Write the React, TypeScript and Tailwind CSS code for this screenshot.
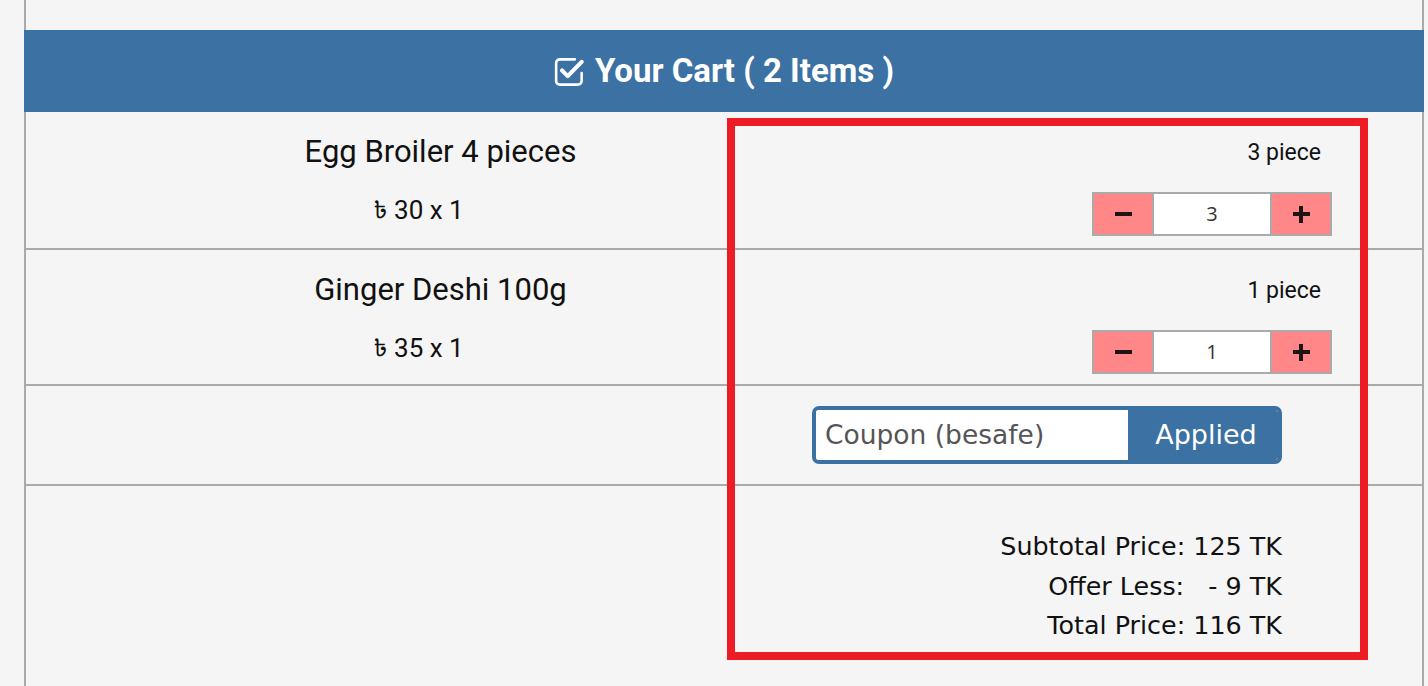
import React from "react";

function CheckIcon() {
  return (
    <svg width="30" height="30" viewBox="0 0 28 28" fill="none" className="mr-[11px] mt-[1px]">
      <path
        d="M19.5 2.2H5.5C3.5 2.2 2 3.7 2 5.7V22.3C2 24.3 3.5 25.8 5.5 25.8H22.3C24.3 25.8 25.8 24.3 25.8 22.3V15"
        stroke="white"
        strokeWidth="2.4"
        strokeLinecap="round"
      />
      <path d="M7.5 12.5L12.8 17.8L25.8 4.5" stroke="white" strokeWidth="3.8" strokeLinecap="round" strokeLinejoin="round" />
    </svg>
  );
}

function Stepper({ value }: { value: number }) {
  return (
    <div className="flex h-[44px] w-[240px] border-2 border-[#aaaaaa] bg-[#aaaaaa] gap-[2px]">
      <div className="flex w-[58px] items-center justify-center bg-[#ff8787]">
        <div className="h-[4px] w-[17px] bg-[#1e1414]" />
      </div>
      <div className="flex flex-1 items-center justify-center bg-white text-[20px] text-[#333] [font-family:'Open_Sans',sans-serif]">
        {value}
      </div>
      <div className="relative flex w-[58px] items-center justify-center bg-[#ff8787]">
        <div className="h-[4px] w-[17px] bg-[#1e1414]" />
        <div className="absolute h-[17px] w-[4px] bg-[#1e1414]" />
      </div>
    </div>
  );
}

function ItemRow({ name, price, qty, h }: { name: string; price: string; qty: number; h: string }) {
  return (
    <div className={`flex border-b-2 border-[#aaaaaa] ${h}`}>
      <div className="flex w-[701px] flex-col items-center pl-[128px] pt-[22px] text-[#111]">
        <div className="text-[31px] leading-[36px]">{name}</div>
        <div className="mt-[22px] pr-[44px] text-[26px] leading-[36px]">
          <span className="[font-family:'Noto_Sans_Bengali','Noto_Sans','DejaVu_Sans',sans-serif] text-[24px]">৳</span> {price}
        </div>
      </div>
      <div className="flex w-[640px] flex-col items-end pt-[27px]">
        <div className="pr-[46px] text-[23px] leading-[28px] text-[#111]">{qty} piece</div>
        <div className="mt-[25px] pr-[35px]">
          <Stepper value={qty} />
        </div>
      </div>
    </div>
  );
}

export default function App() {
  return (
    <div className="min-h-[686px] bg-[#f5f5f5] [font-family:Roboto,sans-serif]">
      <div className="relative ml-[24px] min-h-[686px] w-[1400px] border-x-2 border-[#aaaaaa] pt-[30px]">
        <div className="-mx-[2px] flex h-[82px] items-center justify-center bg-[#3b71a3] text-white">
          <CheckIcon />
          <span className="text-[33px] font-bold">Your Cart ( 2 Items )</span>
        </div>

        <ItemRow name="Egg Broiler 4 pieces" price="30 x 1" qty={3} h="h-[138px]" />
        <ItemRow name="Ginger Deshi 100g" price="35 x 1" qty={1} h="h-[136px]" />

        <div className="flex h-[100px] border-b-2 border-[#aaaaaa]">
          <div className="w-[701px]" />
          <div className="flex w-[640px] justify-center pt-[20px]">
            <div className="flex h-[58px] w-[470px] overflow-hidden rounded-[7px] border-[4px] border-[#3b71a3] [font-family:'DejaVu_Sans',sans-serif]">
              <div className="flex w-[312px] items-center bg-white pl-[9px] text-[26.5px] text-[#555]">Coupon (besafe)</div>
              <div className="flex flex-1 items-center justify-center bg-[#3b71a3] pl-[6px] text-[27px] text-white">Applied</div>
            </div>
          </div>
        </div>

        <div className="flex">
          <div className="w-[701px]" />
          <div className="flex w-[640px] flex-col items-end pr-[85px] pt-[41px] text-[25.4px] leading-[39.5px] text-[#111] [font-family:'DejaVu_Sans',sans-serif]">
            <div>Subtotal Price: 125 TK</div>
            <div className="whitespace-pre">Offer Less:   - 9 TK</div>
            <div>Total Price: 116 TK</div>
          </div>
        </div>

        <div className="pointer-events-none absolute left-[701px] top-[118px] h-[542px] w-[641px] border-[8px] border-[#ed1c24]" />
      </div>
    </div>
  );
}
